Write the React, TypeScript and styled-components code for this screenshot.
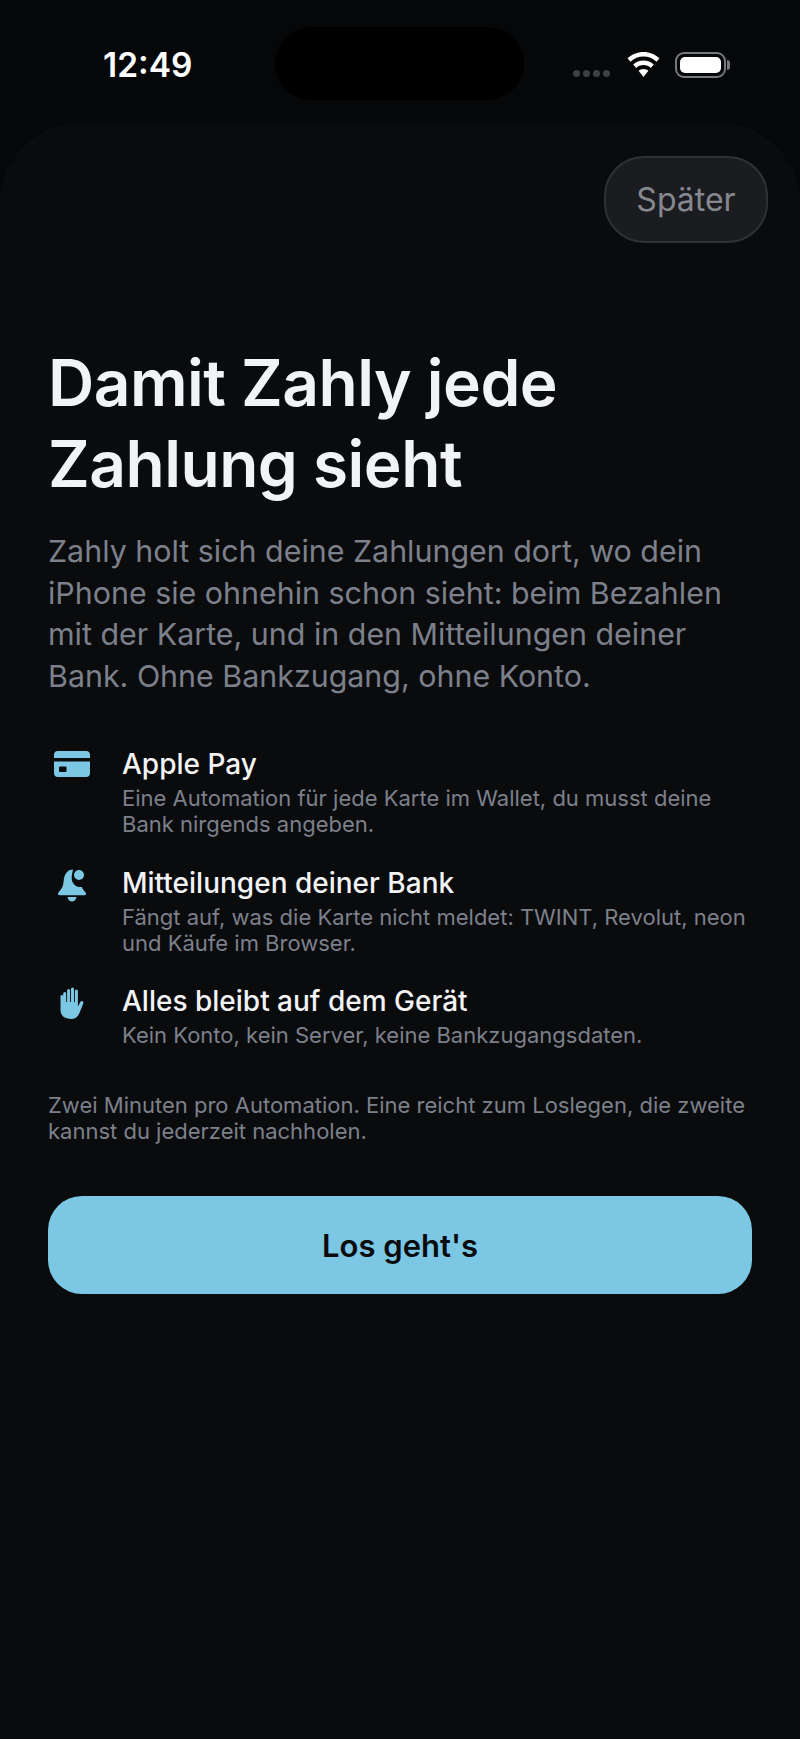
import styled, { createGlobalStyle } from "styled-components"

const GlobalStyle = createGlobalStyle`
	html, body {
		margin: 0;
		padding: 0;
		background: #060709;
	}
	* {
		box-sizing: border-box;
	}
`

const items = [
	{
		icon: "card",
		title: "Apple Pay",
		text: "Eine Automation für jede Karte im Wallet, du musst deine Bank nirgends angeben.",
	},
	{
		icon: "bell",
		title: "Mitteilungen deiner Bank",
		text: "Fängt auf, was die Karte nicht meldet: TWINT, Revolut, neon und Käufe im Browser.",
	},
	{
		icon: "hand",
		title: "Alles bleibt auf dem Gerät",
		text: "Kein Konto, kein Server, keine Bankzugangsdaten.",
	},
]

const CardIcon = () => (
	<svg width="36" height="27" viewBox="0 0 36 27">
		<path
			fill="#7cc7e4"
			fillRule="evenodd"
			d="M0 8V5a4 4 0 0 1 4-4h28a4 4 0 0 1 4 4v3H0ZM0 11.500h36V23a4 4 0 0 1-4 4H4a4 4 0 0 1-4-4V11.500ZM6 16.500a1 1 0 0 0-1 1V21a1 1 0 0 0 1 1h5.500a1 1 0 0 0 1-1v-3.500a1 1 0 0 0-1-1H6Z"
		/>
	</svg>
)

const BellIcon = () => (
	<svg width="30" height="33" viewBox="0 0 30 33">
		<path
			fill="#7cc7e4"
			d="M16 .6C9.500 1 7.200 6 6.600 12.500 6.100 18 4.600 20 1.600 23.200.4 24.500.9 26.300 2.800 26.300h24.400c1.900 0 2.400-1.800 1.200-3.100-1.700-1.800-2.800-3.200-3.500-5.200-5.600.8-10.200-3.400-10.200-8.800 0-3.500 1-6.300 1.300-8.600Z"
		/>
		<circle cx="22" cy="6" r="5" fill="#7cc7e4" />
		<path fill="#7cc7e4" d="M10.500 28h9c-.3 2.700-2.200 4.500-4.500 4.500s-4.200-1.800-4.500-4.500Z" />
	</svg>
)

const HandIcon = () => (
	<svg width="24" height="32" viewBox="0 0 24 32">
		<path
			fill="#7cc7e4"
			d="M3.200 17V6.500a1.500 1.500 0 0 1 3 0V15h.9V3.500a1.500 1.500 0 0 1 3 0V15h.9V2a1.500 1.500 0 0 1 3 0v13h.9V4a1.500 1.500 0 0 1 3 0v15.500l2.300-4.300c.5-1 1.500-1.500 2.400-1 .8.400 1 1.300.6 2.300l-3.300 8.500C18 29.800 15.500 32 11.500 32 6 32 .3 29.500.5 22V9a1.400 1.400 0 0 1 2.700 0v8Z"
		/>
	</svg>
)

const icons: Record<string, () => React.JSX.Element> = {
	card: CardIcon,
	bell: BellIcon,
	hand: HandIcon,
}

const App = () => {
	return (
		<Page>
			<GlobalStyle />
			<StatusBar>
				<Time>12:49</Time>
				<Island />
				<StatusIcons>
					<Signal>
						<Dot />
						<Dot />
						<Dot />
						<Dot />
					</Signal>
					<svg width="33" height="25" viewBox="0 0 33 25">
						<path
							fill="#fff"
							d="M16.500 0c6 0 11.700 2.300 16 6.300l-3 3.400C26 6.400 21.400 4.500 16.500 4.500S7 6.400 3.500 9.700l-3-3.400C4.800 2.300 10.500 0 16.500 0Z"
						/>
						<path
							fill="#fff"
							d="M16.500 8.500c3.900 0 7.500 1.400 10.300 4l-3 3.400c-2-1.800-4.600-2.800-7.300-2.800s-5.300 1-7.300 2.800l-3-3.400c2.800-2.600 6.400-4 10.300-4Z"
						/>
						<path fill="#fff" d="M16.500 17c1.900 0 3.600.7 4.900 1.800l-4.900 6.200-4.900-6.200c1.300-1.100 3-1.800 4.900-1.800Z" />
					</svg>
					<Battery>
						<BatteryFill />
					</Battery>
				</StatusIcons>
			</StatusBar>
			<Sheet>
				<TopRow>
					<LaterButton>Später</LaterButton>
				</TopRow>
				<Content>
					<Title>
						Damit Zahly jede
						<br />
						Zahlung sieht
					</Title>
					<Lead>
						Zahly holt sich deine Zahlungen dort, wo dein iPhone sie ohnehin schon sieht: beim Bezahlen mit der Karte,
						und in den Mitteilungen deiner Bank. Ohne Bankzugang, ohne Konto.
					</Lead>
					<List>
						{items.map((item) => {
							const Icon = icons[item.icon]
							return (
								<Item key={item.title}>
									<IconSlot>
										<Icon />
									</IconSlot>
									<div>
										<ItemTitle>{item.title}</ItemTitle>
										<ItemText>{item.text}</ItemText>
									</div>
								</Item>
							)
						})}
					</List>
					<Note>Zwei Minuten pro Automation. Eine reicht zum Loslegen, die zweite kannst du jederzeit nachholen.</Note>
					<PrimaryButton>Los geht's</PrimaryButton>
				</Content>
			</Sheet>
		</Page>
	)
}

export default App

const Page = styled.div`
	width: 800px;
	height: 1739px;
	display: flex;
	flex-direction: column;
	overflow: hidden;
	background: #060709;
	font-family: Inter, "Liberation Sans", sans-serif;
`

const StatusBar = styled.div`
	height: 123px;
	flex-shrink: 0;
	display: grid;
	grid-template-columns: 275px 249px 1fr;
	padding-top: 27px;
`

const Time = styled.div`
	color: #fff;
	font-size: 33.500px;
	font-weight: 600;
	line-height: 40px;
	margin-top: 18px;
	padding-left: 103px;
`

const Island = styled.div`
	height: 73px;
	border-radius: 37px;
	background: #000;
`

const StatusIcons = styled.div`
	display: flex;
	align-items: flex-start;
	padding: 25px 0 0 49px;
`

const Signal = styled.div`
	display: flex;
	gap: 3px;
	margin: 18px 17px 0 0;
`

const Dot = styled.span`
	width: 7px;
	height: 7px;
	border-radius: 50%;
	background: #3f4042;
`

const Battery = styled.div`
	position: relative;
	width: 51px;
	height: 26px;
	margin-left: 15px;
	padding: 3px;
	border: 2px solid #77787a;
	border-radius: 9px;

	&::after {
		content: "";
		position: absolute;
		right: -6px;
		top: 6px;
		width: 3px;
		height: 10px;
		border-radius: 0 3px 3px 0;
		background: #77787a;
	}
`

const BatteryFill = styled.div`
	height: 100%;
	border-radius: 5px;
	background: #fff;
`

const Sheet = styled.div`
	flex: 1;
	background: #0a0b0d;
	border-radius: 80px 80px 0 0;
`

const TopRow = styled.div`
	display: flex;
	justify-content: flex-end;
	padding: 33px 32px 0 0;
`

const LaterButton = styled.button`
	width: 164px;
	height: 87px;
	border: 2px solid #303134;
	border-radius: 40px;
	background: #1b1c1f;
	color: #85888f;
	font-family: inherit;
	font-size: 32px;
	font-weight: 400;
`

const Content = styled.div`
	padding: 99px 48px 0;
`

const Title = styled.h1`
	margin: 0;
	color: #f2f3f5;
	font-size: 64px;
	font-weight: 600;
	line-height: 81px;
	letter-spacing: -0.5px;
`

const Lead = styled.p`
	margin: 27px 0 0;
	color: #7c808b;
	font-size: 30.400px;
	line-height: 41.600px;
`

const List = styled.div`
	display: flex;
	flex-direction: column;
	gap: 28.500px;
	margin-top: 50px;
`

const Item = styled.div`
	display: grid;
	grid-template-columns: 74px 1fr;
`

const IconSlot = styled.div`
	display: flex;
	justify-content: center;
	width: 48px;
	height: 40px;
	padding-top: 3px;
`

const ItemTitle = styled.div`
	color: #f2f3f5;
	font-size: 28px;
	font-weight: 500;
	line-height: 34px;
`

const ItemText = styled.div`
	margin-top: 4px;
	color: #7c808b;
	font-size: 22px;
	line-height: 26px;
`

const Note = styled.p`
	margin: 44px 0 0;
	color: #7c808b;
	font-size: 22px;
	line-height: 26px;
`

const PrimaryButton = styled.button`
	display: block;
	width: 100%;
	height: 98px;
	margin-top: 52px;
	border: none;
	border-radius: 34px;
	background: #7cc7e4;
	color: #0a0b0d;
	font-family: inherit;
	font-size: 31px;
	font-weight: 600;
`
